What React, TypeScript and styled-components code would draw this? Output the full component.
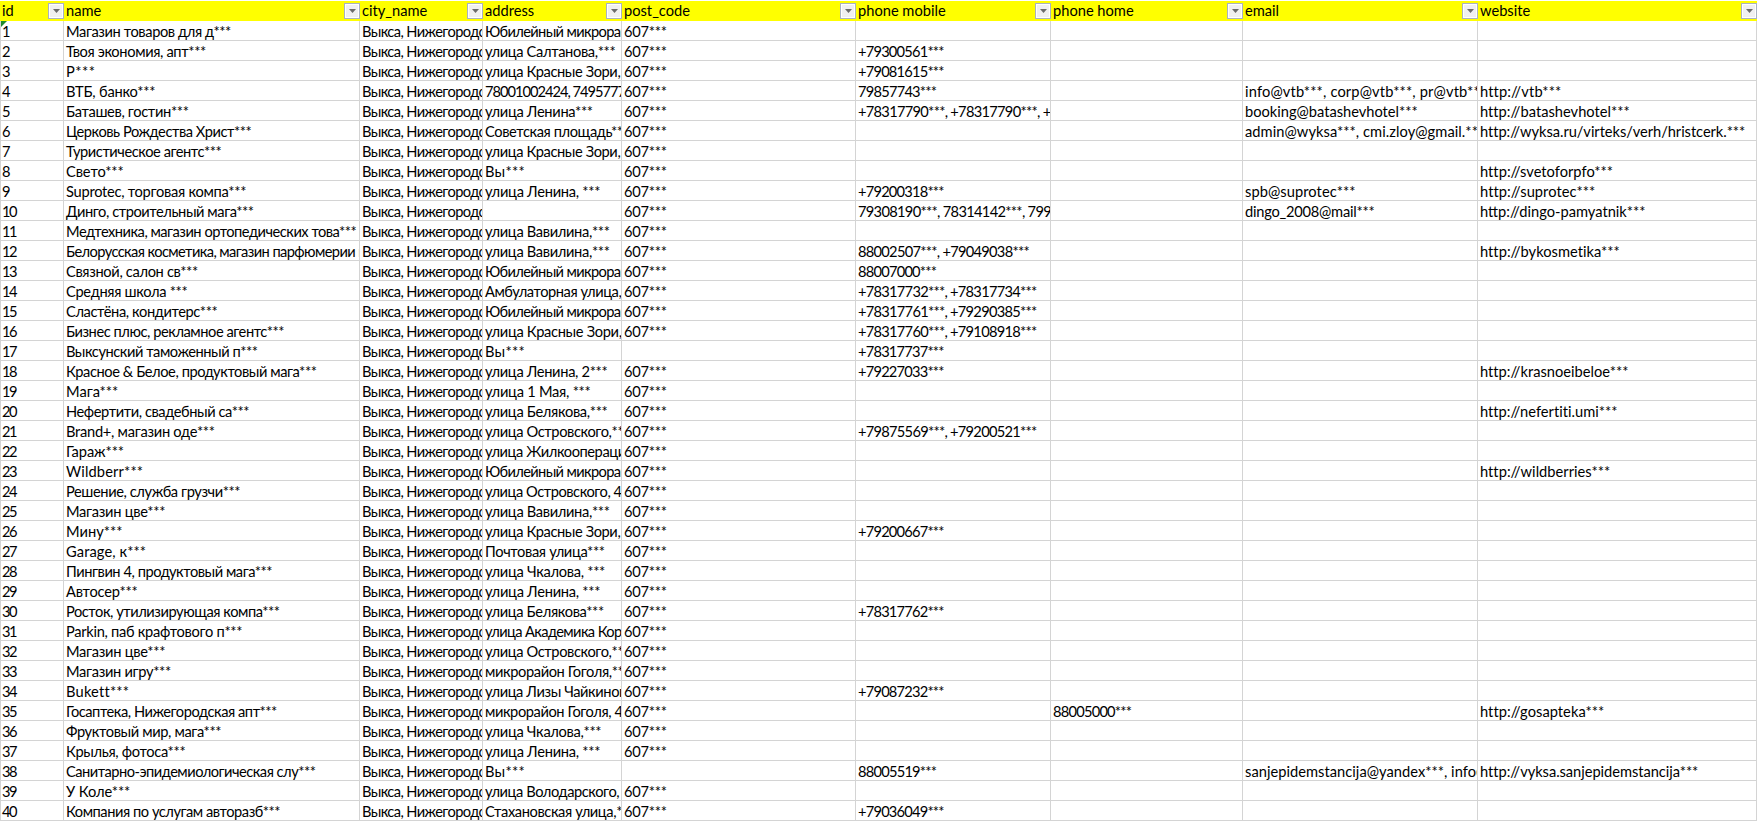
import React from "react";
import styled, { createGlobalStyle } from "styled-components";

const GlobalStyle = createGlobalStyle`
  html, body { margin: 0; padding: 0; background: #ffffff; overflow: hidden; }
  #root { width: 1757px; height: 821px; }
`;

const Sheet = styled.div`
  width: 1757px;
  height: 821px;
  padding-top: 1px;
  box-sizing: border-box;
  background: #ffffff;
  font-family: "Lato", "Noto Sans", "Liberation Sans", sans-serif;
  font-size: 14.67px;
  color: #000000;
  overflow: hidden;
`;

const COLS = "64px 296px 123px 139px 234px 195px 192px 235px 279px";

const HeaderRow = styled.div`
  display: grid;
  grid-template-columns: ${COLS};
  height: 20px;
  background: #ffff00;
`;

const HeaderCell = styled.div`
  position: relative;
  padding-left: 2px;
  line-height: 19px;
  overflow: hidden;
  white-space: nowrap;
`;

const FilterButton = styled.span`
  position: absolute;
  right: 0;
  top: 2px;
  width: 16px;
  height: 16px;
  box-sizing: border-box;
  display: flex;
  align-items: center;
  justify-content: center;
  background: #f0f0f0;
  border: 1px solid #a9b2c0;
  box-shadow: inset 0 0 0 1px #ffffff;
`;

const Arrow = styled.svg`
  width: 7px;
  height: 4px;
  display: block;
`;

const Row = styled.div`
  position: relative;
  display: grid;
  grid-template-columns: ${COLS};
  height: 20px;
  box-shadow: inset 1px 0 0 #d4d4d4;
`;

const Cell = styled.div<{ $spacing: number }>`
  box-sizing: border-box;
  height: 20px;
  padding: 0 0 0 2px;
  border-right: 1px solid #d4d4d4;
  border-bottom: 1px solid #d4d4d4;
  line-height: 21px;
  letter-spacing: ${(p) => p.$spacing}px;
  overflow: hidden;
  white-space: nowrap;
`;

const ErrorMark = styled.svg`
  position: absolute;
  left: 1px;
  top: 0;
  width: 6px;
  height: 6px;
`;

const HEAD = ["id", "name", "city_name", "address", "post_code", "phone mobile", "phone home", "email", "website"];
const CITY = "Выкса, Нижегородская область";
const PC = "607***";

type R = [string, string, string?, string?, string?, string?, string?];

const ROWS: R[] = [
  ["Магазин товаров для д***", "Юбилейный микрорайон", PC],
  ["Твоя экономия, апт***", "улица Салтанова,***", PC, "+79300561***"],
  ["Р***", "улица Красные Зори, 1***", PC, "+79081615***"],
  ["ВТБ, банко***", "78001002424, 74957772***", PC, "79857743***", "", "info@vtb***, corp@vtb***, pr@vtb***", "http://vtb***"],
  ["Баташев, гостин***", "улица Ленина***", PC, "+78317790***, +78317790***, +78317790***", "", "booking@batashevhotel***", "http://batashevhotel***"],
  ["Церковь Рождества Христ***", "Советская площадь***", PC, "", "", "admin@wyksa***, cmi.zloy@gmail.***", "http://wyksa.ru/virteks/verh/hristcerk.***"],
  ["Туристическое агентс***", "улица Красные Зори, 1***", PC],
  ["Свето***", "Вы***", PC, "", "", "", "http://svetoforpfo***"],
  ["Suprotec, торговая компа***", "улица Ленина, ***", PC, "+79200318***", "", "spb@suprotec***", "http://suprotec***"],
  ["Динго, строительный мага***", "", PC, "79308190***, 78314142***, 79991234***", "", "dingo_2008@mail***", "http://dingo-pamyatnik***"],
  ["Медтехника, магазин ортопедических това***", "улица Вавилина,***", PC],
  ["Белорусская косметика, магазин парфюмерии и косметики", "улица Вавилина,***", PC, "88002507***, +79049038***", "", "", "http://bykosmetika***"],
  ["Связной, салон св***", "Юбилейный микрорайон", PC, "88007000***"],
  ["Средняя школа ***", "Амбулаторная улица, 1***", PC, "+78317732***, +78317734***"],
  ["Сластёна, кондитерс***", "Юбилейный микрорайон", PC, "+78317761***, +79290385***"],
  ["Бизнес плюс, рекламное агентс***", "улица Красные Зори,   ***", PC, "+78317760***, +79108918***"],
  ["Выксунский таможенный п***", "Вы***", "", "+78317737***"],
  ["Красное & Белое, продуктовый мага***", "улица Ленина, 2***", PC, "+79227033***", "", "", "http://krasnoeibeloe***"],
  ["Мага***", "улица 1 Мая, ***", PC],
  ["Нефертити, свадебный са***", "улица Белякова,***", PC, "", "", "", "http://nefertiti.umi***"],
  ["Brand+, магазин оде***", "улица Островского,***", PC, "+79875569***, +79200521***"],
  ["Гараж***", "улица Жилкооперации, 1***", PC],
  ["Wildberr***", "Юбилейный микрорайон", PC, "", "", "", "http://wildberries***"],
  ["Решение, служба грузчи***", "улица Островского, 48***", PC],
  ["Магазин цве***", "улица Вавилина,***", PC],
  ["Мину***", "улица Красные Зори, 1***", PC, "+79200667***"],
  ["Garage, к***", "Почтовая улица***", PC],
  ["Пингвин 4, продуктовый мага***", "улица Чкалова, ***", PC],
  ["Автосер***", "улица Ленина, ***", PC],
  ["Росток, утилизирующая компа***", "улица Белякова***", PC, "+78317762***"],
  ["Parkin, паб крафтового п***", "улица Академика Королёва", PC],
  ["Магазин цве***", "улица Островского,***", PC],
  ["Магазин игру***", "микрорайон Гоголя,***", PC],
  ["Bukett***", "улица Лизы Чайкиной, 1***", PC, "+79087232***"],
  ["Госаптека, Нижегородская апт***", "микрорайон Гоголя, 4***", PC, "", "88005000***", "", "http://gosapteka***"],
  ["Фруктовый мир, мага***", "улица Чкалова,***", PC],
  ["Крылья, фотоса***", "улица Ленина, ***", PC],
  ["Санитарно-эпидемиологическая слу***", "Вы***", "", "88005519***", "", "sanjepidemstancija@yandex***, info@***", "http://vyksa.sanjepidemstancija***"],
  ["У Коле***", "улица Володарского, 1***", PC],
  ["Компания по услугам авторазб***", "Стахановская улица,***", PC, "+79036049***"],
];

// Lato is wider than the sheet's font for digits and Cyrillic, narrower for stars:
// the tracking of a cell is averaged from the characters it holds.
function tracking(text: string): number {
  if (!text) return 0;
  let total = 0;
  for (const ch of text) {
    if (/[0-9]/.test(ch)) total += -1.4;
    else if (ch === "*") total += 0.9;
    else if (ch === "+") total += -1;
    else if (/[А-Яа-яЁё]/.test(ch)) total += -0.68;
    else if (/[A-Za-z]/.test(ch)) total += -0.15;
  }
  return Math.round((total / [...text].length) * 100) / 100;
}

export default function App() {
  return (
    <Sheet>
      <GlobalStyle />
      <HeaderRow>
        {HEAD.map((h) => (
          <HeaderCell key={h}>
            {h}
            <FilterButton>
              <Arrow viewBox="0 0 7 4">
                <path d="M0 0H7L3.5 4Z" fill="#6b6b6b" />
              </Arrow>
            </FilterButton>
          </HeaderCell>
        ))}
      </HeaderRow>
      {ROWS.map((r, i) => {
        const cells = [String(i + 1), r[0], CITY, r[1], r[2] ?? "", r[3] ?? "", r[4] ?? "", r[5] ?? "", r[6] ?? ""];
        return (
          <Row key={i}>
            {i === 0 && (
              <ErrorMark viewBox="0 0 6 6">
                <path d="M0 0H6L0 6Z" fill="#1e8a2e" />
              </ErrorMark>
            )}
            {cells.map((text, c) => (
              <Cell key={c} $spacing={tracking(text)}>
                {text}
              </Cell>
            ))}
          </Row>
        );
      })}
    </Sheet>
  );
}
